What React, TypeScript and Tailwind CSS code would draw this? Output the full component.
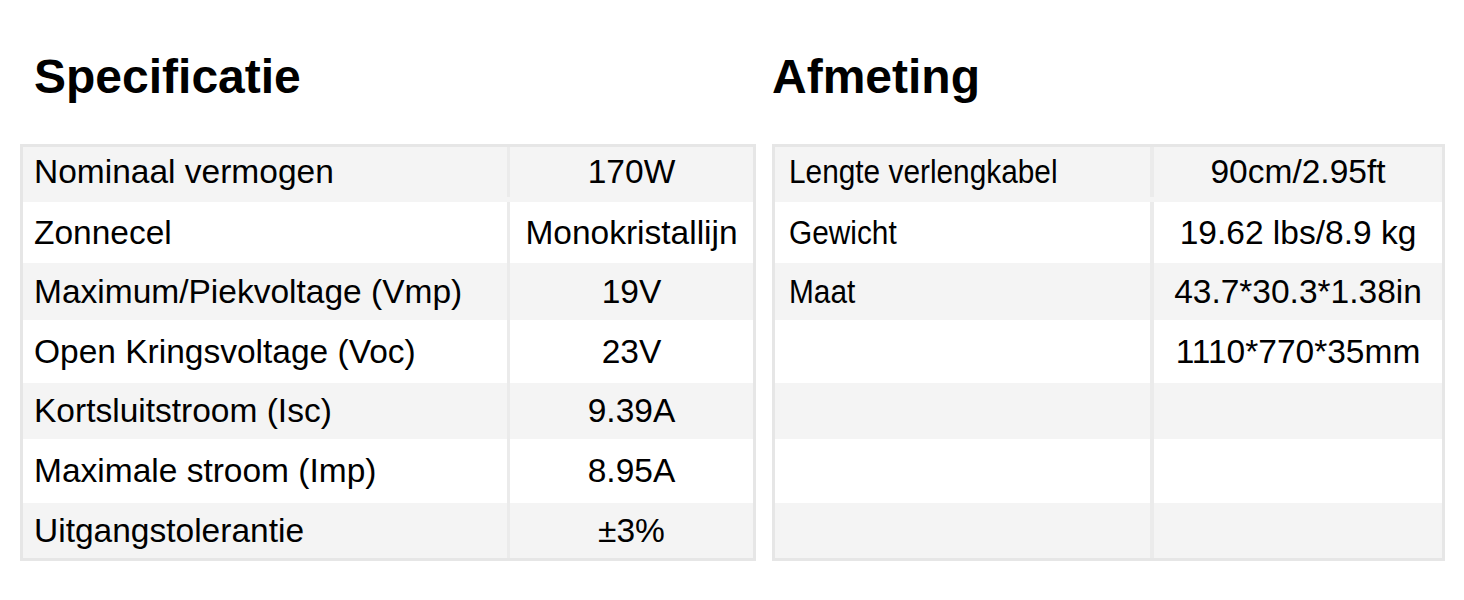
const rowH = ["h-[55px] pb-[5px]", "h-[61px]", "h-[57px]", "h-[63px]", "h-[56px]", "h-[64px]", "h-[55px]"];

const spec = [
    ["Nominaal vermogen", "170W"],
    ["Zonnecel", "Monokristallijn"],
    ["Maximum/Piekvoltage (Vmp)", "19V"],
    ["Open Kringsvoltage (Voc)", "23V"],
    ["Kortsluitstroom (Isc)", "9.39A"],
    ["Maximale stroom (Imp)", "8.95A"],
    ["Uitgangstolerantie", "±3%"],
];

const afmeting = [
    ["Lengte verlengkabel", "90cm/2.95ft"],
    ["Gewicht", "19.62 lbs/8.9 kg"],
    ["Maat", "43.7*30.3*1.38in"],
    ["", "1110*770*35mm"],
    ["", ""],
    ["", ""],
    ["", ""],
];

export default function App() {
    return <div className="w-[1464px] h-[600px] bg-white text-black flex gap-[16px] pl-[20px]"
                style={{fontFamily: '"Liberation Sans", Arial, sans-serif'}}>
        <div className="flex flex-col w-[736px]">
            <div className="pt-[49px] pb-[39px] pl-[14px] text-[48px] font-bold leading-[56px]">Specificatie</div>
            <div className="border-[3px] border-[#e6e6e6]">
                {spec.map(([k, v], i) =>
                    <div key={i} className={`flex ${rowH[i]} ${i % 2 === 0 ? "bg-[#f4f4f4]" : "bg-white"}`}>
                        <div className="w-[487px] border-r-[3px] border-[#ebebeb] flex items-center pl-[11px] text-[33.5px] leading-none">{k}</div>
                        <div className="flex-1 flex items-center justify-center text-[33.5px] leading-none">{v}</div>
                    </div>
                )}
            </div>
        </div>
        <div className="flex flex-col w-[673px]">
            <div className="pt-[49px] pb-[39px] text-[48px] font-bold leading-[56px]">Afmeting</div>
            <div className="border-[3px] border-[#e6e6e6]">
                {afmeting.map(([k, v], i) =>
                    <div key={i} className={`flex ${rowH[i]} ${i % 2 === 0 ? "bg-[#f4f4f4]" : "bg-white"}`}>
                        <div className="w-[379px] border-r-4 border-[#ebebeb] flex items-center pl-[14px] text-[33.5px] leading-none">
                            <span className="inline-block origin-left scale-x-[0.89]">{k}</span>
                        </div>
                        <div className="flex-1 flex items-center justify-center text-[33.5px] leading-none">{v}</div>
                    </div>
                )}
            </div>
        </div>
    </div>
}
